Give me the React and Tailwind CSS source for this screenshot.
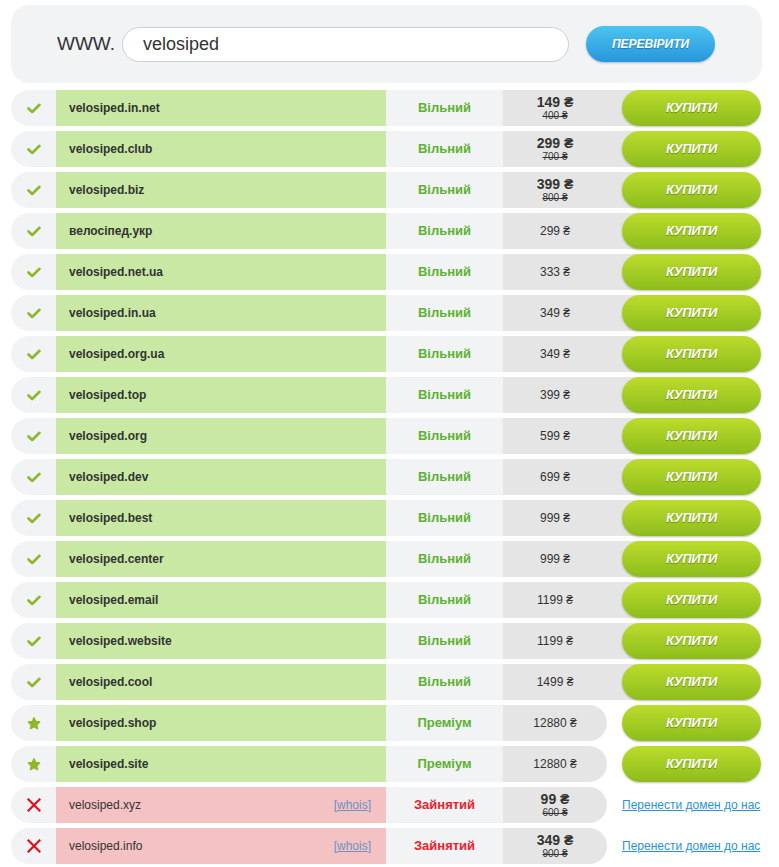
import { useState } from "react";

const domains = [
    { name: "velosiped.in.net", status: "free", price: "149", old: "400" },
    { name: "velosiped.club", status: "free", price: "299", old: "700" },
    { name: "velosiped.biz", status: "free", price: "399", old: "800" },
    { name: "велосіпед.укр", status: "free", price: "299" },
    { name: "velosiped.net.ua", status: "free", price: "333" },
    { name: "velosiped.in.ua", status: "free", price: "349" },
    { name: "velosiped.org.ua", status: "free", price: "349" },
    { name: "velosiped.top", status: "free", price: "399" },
    { name: "velosiped.org", status: "free", price: "599" },
    { name: "velosiped.dev", status: "free", price: "699" },
    { name: "velosiped.best", status: "free", price: "999" },
    { name: "velosiped.center", status: "free", price: "999" },
    { name: "velosiped.email", status: "free", price: "1199" },
    { name: "velosiped.website", status: "free", price: "1199" },
    { name: "velosiped.cool", status: "free", price: "1499" },
    { name: "velosiped.shop", status: "premium", price: "12880" },
    { name: "velosiped.site", status: "premium", price: "12880" },
    { name: "velosiped.xyz", status: "taken", price: "99", old: "600" },
    { name: "velosiped.info", status: "taken", price: "349", old: "900" },
];

function CheckIcon() {
    return (
        <svg width="14" height="11" viewBox="0 0 14 11">
            <path d="M1.5 5.5 L5.2 9 L12.5 1.8" fill="none" stroke="#8db828" strokeWidth="2.6" strokeLinecap="round" strokeLinejoin="round" />
        </svg>
    );
}

function StarIcon() {
    return (
        <svg width="14" height="13" viewBox="0 0 24 23">
            <path d="M12 1.5 L15 8 L22 8.8 L16.8 13.6 L18.3 20.8 L12 17.2 L5.7 20.8 L7.2 13.6 L2 8.8 L9 8 Z" fill="#8db828" stroke="#8db828" strokeWidth="2.5" strokeLinejoin="round" />
        </svg>
    );
}

function CrossIcon() {
    return (
        <svg width="14" height="14" viewBox="0 0 14 14">
            <path d="M1.5 1.5 L12.5 12.5 M12.5 1.5 L1.5 12.5" stroke="#e3101b" strokeWidth="2.2" strokeLinecap="square" />
        </svg>
    );
}

function BuyButton({ className = "" }) {
    return (
        <button className={`relative w-[139px] h-[36px] rounded-full bg-gradient-to-b from-[#bcdc2c] to-[#8dbd1c] shadow-[0_1px_2px_rgba(0,0,0,0.25)] text-white text-[13px] font-bold italic tracking-tight [text-shadow:0_1px_1px_rgba(0,0,0,0.35)] ${className}`}>
            КУПИТИ
        </button>
    );
}

function PriceText({ d }) {
    if (d.old) {
        return (
            <>
                <span className="text-[14px] font-bold leading-[15px]">{d.price} ₴</span>
                <span className="text-[10px] leading-[11px] line-through">{d.old} ₴</span>
            </>
        );
    }
    return <span className="text-[12px]">{d.price} ₴</span>;
}

function DomainRow({ d }) {
    const free = d.status === "free";
    const premium = d.status === "premium";
    const taken = d.status === "taken";

    return (
        <div className="flex items-stretch h-[36px]">
            <div className="w-[45px] bg-[#f2f3f5] rounded-l-full flex items-center justify-center">
                {free && <CheckIcon />}
                {premium && <StarIcon />}
                {taken && <CrossIcon />}
            </div>
            <div className={`w-[330px] flex items-center justify-between pl-[13px] pr-[15px] text-[12px] text-[#333] ${taken ? "bg-[#f4c2c3]" : "bg-[#c9e8a3] font-bold"}`}>
                <span>{d.name}</span>
                {taken && (
                    <span className="text-[12px] text-[#6b93c6]">
                        [<span className="underline">whois</span>]
                    </span>
                )}
            </div>
            <div className={`w-[117px] bg-[#f2f3f5] flex items-center justify-center text-[13px] font-bold ${taken ? "text-[#e8232b]" : "text-[#5bb22e]"}`}>
                {free ? "Вільний" : premium ? "Преміум" : "Зайнятий"}
            </div>
            {free ? (
                <>
                    {/* gray cell runs on under the button's left end */}
                    <div className="w-[139px] bg-[#e5e5e5] flex flex-col items-center justify-center pr-[35px] text-[#333]">
                        <PriceText d={d} />
                    </div>
                    <BuyButton className="-ml-[20px]" />
                </>
            ) : (
                <>
                    <div className="w-[104px] bg-[#e5e5e5] rounded-r-full flex flex-col items-center justify-center text-[#333]">
                        <PriceText d={d} />
                    </div>
                    <div className="ml-[15px] flex items-center">
                        {premium ? (
                            <BuyButton />
                        ) : (
                            <a href="#" className="text-[12px] text-[#2a93d8] underline whitespace-nowrap">
                                Перенести домен до нас
                            </a>
                        )}
                    </div>
                </>
            )}
        </div>
    );
}

export default function App() {
    const [query, setQuery] = useState("velosiped");

    return (
        <div className="w-[779px] min-h-[867px] bg-white pt-[5px] pl-[11px] font-['Liberation_Sans',Arial,sans-serif]">
            <div className="w-[751px] h-[78px] bg-[#f2f3f5] rounded-[18px] flex items-center pl-[46px]">
                <span className="text-[19px] text-[#333] mr-[7px]">WWW.</span>
                <input
                    type="text"
                    value={query}
                    onChange={(e) => setQuery(e.target.value)}
                    className="w-[447px] h-[35px] rounded-full bg-white border border-[#cfcfcf] pl-[20px] text-[18px] text-[#333] outline-none"
                />
                <button className="ml-[17px] w-[129px] h-[36px] rounded-full bg-gradient-to-b from-[#4cc4ef] to-[#2796dd] shadow-[0_1px_2px_rgba(0,0,0,0.25)] text-white text-[12px] font-bold italic [text-shadow:0_1px_1px_rgba(0,0,0,0.3)]">
                    ПЕРЕВІРИТИ
                </button>
            </div>

            <div className="mt-[7px] flex flex-col gap-[5px]">
                {domains.map((d) => (
                    <DomainRow key={d.name} d={d} />
                ))}
            </div>
        </div>
    );
}
